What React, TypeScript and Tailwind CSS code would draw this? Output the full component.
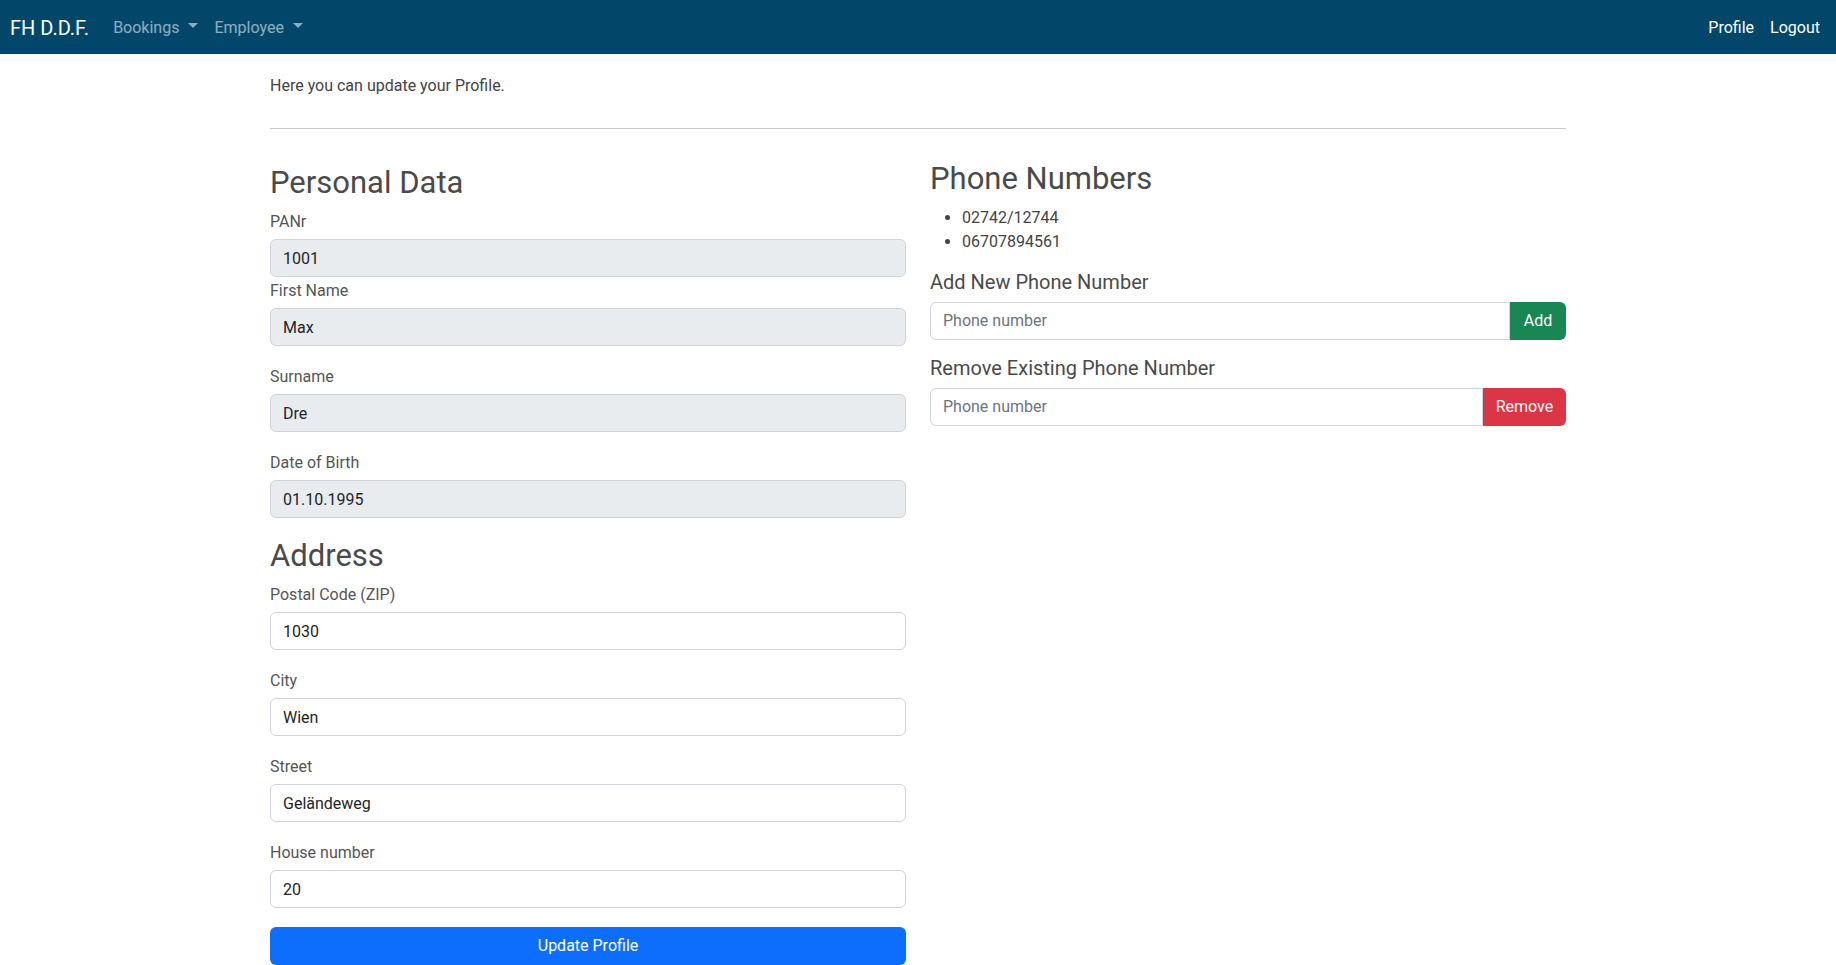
import React from "react";

const font = { fontFamily: "Roboto, 'Open Sans', sans-serif" };

const Caret = () => (
  <span className="ml-[9px] inline-block h-0 w-0 translate-y-[-3px] border-x-[5px] border-t-[5px] border-x-transparent border-t-current align-middle" />
);

const Field = ({
  label,
  value,
  readOnly,
  tight,
}: {
  label: string;
  value: string;
  readOnly?: boolean;
  tight?: boolean;
}) => (
  <div className={tight ? "mb-[2px]" : "mb-[19px]"}>
    <label className="mb-[5px] block text-[16px] leading-6 text-[#555]">{label}</label>
    <input
      readOnly
      defaultValue={value}
      className={`block h-[38px] w-full rounded-[6px] border border-[#ced4da] px-3 text-[16px] text-[#212529] outline-none ${
        readOnly ? "bg-[#e9ecef]" : "bg-white"
      }`}
    />
  </div>
);

const PhoneForm = ({
  title,
  button,
  color,
  width,
}: {
  title: string;
  button: string;
  color: string;
  width: string;
}) => (
  <div className="mb-4">
    <h5 className="mb-2 text-[20px] leading-6 text-[#4a4a4a]">{title}</h5>
    <div className="flex h-[38px]">
      <input
        placeholder="Phone number"
        className="min-w-0 flex-1 rounded-l-[6px] border border-[#ced4da] px-3 text-[16px] text-[#212529] outline-none placeholder:text-[#6c757d]"
      />
      <button className={`${color} ${width} rounded-r-[6px] text-[16px] text-white`}>{button}</button>
    </div>
  </div>
);

export default function App() {
  return (
    <div className="min-h-screen bg-white text-[#4a4a4a]" style={font}>
      {/* Navbar */}
      <nav className="flex h-[54px] items-center bg-[#024769] pl-[10px] pr-2 pt-[2px]">
        <span className="mr-4 text-[20px] text-white">FH D.D.F.</span>
        <a className="flex items-center px-2 text-[16px] text-white/55">
          Bookings
          <Caret />
        </a>
        <a className="flex items-center px-2 text-[16px] text-white/55">
          Employee
          <Caret />
        </a>
        <div className="ml-auto flex items-center">
          <a className="px-2 text-[16px] text-white">Profile</a>
          <a className="px-2 text-[16px] text-white">Logout</a>
        </div>
      </nav>

      <main className="mx-auto w-[1296px]">
        <p className="mt-[20px] text-[16px] leading-6 text-[#444]">Here you can update your Profile.</p>
        <hr className="mt-[30px] mb-4 border-t border-[#c8c9ca]" />

        <div className="grid grid-cols-2 gap-x-6">
          {/* Left column */}
          <div className="pt-[19px]">
            <h2 className="mb-2 text-[31px] leading-[38px] text-[#4a4a4a]">Personal Data</h2>
            <Field label="PANr" value="1001" readOnly tight />
            <Field label="First Name" value="Max" readOnly />
            <Field label="Surname" value="Dre" readOnly />
            <Field label="Date of Birth" value="01.10.1995" readOnly />

            <h2 className="mb-2 text-[31px] leading-[38px] text-[#4a4a4a]">Address</h2>
            <Field label="Postal Code (ZIP)" value="1030" />
            <Field label="City" value="Wien" />
            <Field label="Street" value="Geländeweg" />
            <Field label="House number" value="20" />
            <button className="h-[38px] w-full rounded-[6px] bg-[#0d6efd] text-[16px] text-white">
              Update Profile
            </button>
          </div>

          {/* Right column */}
          <div className="pt-[15px]">
            <h2 className="mb-2 text-[31px] leading-[38px] text-[#4a4a4a]">Phone Numbers</h2>
            <ul className="mb-4 list-disc pl-8 text-[16px] leading-6 text-[#444]">
              <li>02742/12744</li>
              <li>06707894561</li>
            </ul>
            <PhoneForm title="Add New Phone Number" button="Add" color="bg-[#198754]" width="w-[56px]" />
            <PhoneForm
              title="Remove Existing Phone Number"
              button="Remove"
              color="bg-[#dc3545]"
              width="w-[83px]"
            />
          </div>
        </div>
      </main>
    </div>
  );
}
